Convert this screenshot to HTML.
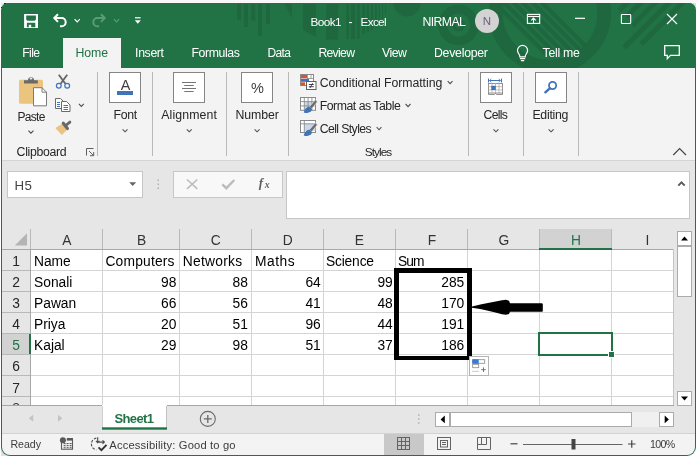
<!DOCTYPE html>
<html>
<head>
<meta charset="utf-8">
<title>Book1 - Excel</title>
<style>
html,body{margin:0;padding:0;background:#fff;}
body{width:698px;height:459px;overflow:hidden;position:relative;font-family:"Liberation Sans",sans-serif;font-size:12px;color:#262626;}
#frame{position:absolute;left:1px;top:3px;width:695px;height:453px;background:#217346;border-radius:7px 7px 9px 9px;}
#c{position:absolute;left:0;top:0;width:698px;height:459px;will-change:transform;clip-path:inset(3px 3px 4px 2px round 6px 6px 8px 8px);}
#c div,#c svg{position:absolute;}
.t{white-space:nowrap;}
svg{overflow:visible;}
</style>
</head>
<body>
<div style="position:absolute;left:0;top:0;width:698px;height:3px;background:#f8f8f8"></div><div style="position:absolute;left:1px;top:3px;width:7px;height:7px;background:#e6e6e6"></div><div style="position:absolute;left:689px;top:3px;width:7px;height:7px;background:#dedede"></div><div style="position:absolute;left:1px;top:448px;width:8px;height:8px;background:#e0e0e0"></div>
<div id="frame"></div><div style="position:absolute;left:4px;top:3px;width:2px;height:1px;background:#222"></div><div style="position:absolute;left:1px;top:7px;width:1px;height:1px;background:#222"></div>
<div id="c">
<div style="left:2px;top:3px;width:694px;height:65px;background:#217346;"></div>
<div style="left:2px;top:68px;width:694px;height:92px;background:#f3f3f3;"></div>
<div style="left:2px;top:160px;width:694px;height:1px;background:#d4d4d4;"></div>
<div style="left:2px;top:161px;width:694px;height:273px;background:#e6e6e6;"></div>
<div style="left:2px;top:434px;width:694px;height:22px;background:#f3f3f3;"></div>
<svg style="left:0;top:0" width="698" height="68" viewBox="0 0 698 68"><defs><clipPath id="gc"><rect x="2" y="3" width="694" height="65"/></clipPath></defs><g clip-path="url(#gc)"><g fill="#1f673e"><rect x="237" y="4" width="4.0" height="16"/><rect x="244" y="4" width="4.0" height="23"/><rect x="251.3" y="4" width="3.9" height="16.6"/><rect x="258.2" y="4" width="3.9" height="32"/><rect x="266" y="4" width="4.0" height="19.7"/><path d="M284.800 4 L292 4 L292 18 Z"/><path d="M303 4 L316 4 L316 37 L303 30 Z"/><rect x="326.3" y="4" width="11.9" height="35.5"/><rect x="346.4" y="4" width="2.8" height="35"/><rect x="351" y="4" width="4.0" height="35"/><rect x="357" y="4" width="2.6" height="34.5"/><rect x="362.4" y="4" width="2.4" height="30.200000000000003"/><rect x="366.6" y="4" width="2.4" height="28.299999999999997"/><rect x="371.2" y="4" width="1.8" height="25.6"/><rect x="375.2" y="4" width="1.5" height="22"/><rect x="378.9" y="4" width="1.1" height="18.3"/><rect x="382.2" y="4" width="0.9" height="14.600000000000001"/><rect x="385" y="4" width="0.9" height="10"/><circle cx="407" cy="3" r="13.500"/></g><circle cx="458.5" cy="25" r="15.9" fill="none" stroke="#1f673e" stroke-width="8.8"/><circle cx="458.5" cy="25" r="4.8" fill="none" stroke="#1f673e" stroke-width="3.4"/><circle cx="550" cy="12.7" r="54.1" fill="none" stroke="#1f673e" stroke-width="13.7"/><clipPath id="rc"><circle cx="550" cy="12.7" r="48"/></clipPath><g clip-path="url(#rc)" stroke="#1f673e" stroke-width="4.2"><path d="M485.0 -7 L547.0 55"/><path d="M494.5 -7 L556.5 55"/><path d="M504.0 -7 L566.0 55"/><path d="M513.5 -7 L575.5 55"/><path d="M523.0 -7 L585.0 55"/><path d="M532.5 -7 L594.5 55"/></g><g stroke="#1f673e" stroke-width="5"><path d="M629.7 0 L619.2 10.5"/><path d="M643.5 0 L626.5 17"/><path d="M657.8 0 L632.3 25.5"/><path d="M671.6 0 L624.1 47.5"/><path d="M685.2 0 L641.2 44"/></g></g></svg>
<div style="left:63px;top:38px;width:58px;height:30px;background:#f3f3f3;"></div>
<svg style="left:0;top:0" width="698" height="68" viewBox="0 0 698 68">
<path fill-rule="evenodd" fill="#ffffff" d="M24.1 14 H38 V28 H24.1 Z M26.200 15.500 V19.600 L27.300 20.700 H34.800 L35.900 19.600 V15.500 Z M26.900 22.800 V27.200 H28.800 V24.800 H31.200 V27.200 H35.300 V22.800 Z"/>
<g fill="none" stroke="#ffffff" stroke-width="2" stroke-linejoin="miter">
<path d="M58 14.3 L54.3 18.1 L58 21.9"/>
<path d="M54.8 18.1 H61.6 A4.1 4.1 0 0 1 61.6 26.3 H60"/>
</g>
<g fill="none" stroke="#5c9a78" stroke-width="2">
<path d="M101 14.300 L104.700 18.100 L101 21.900"/>
<path d="M104.200 18.100 H97.400 A4.100 4.100 0 0 0 97.400 26.300 H99"/>
</g>
<path d="M74.6 19.2 L77.2 21.8 L79.8 19.2" fill="none" stroke="#ffffff" stroke-width="1.2"/>
<path d="M113.9 19.2 L116.5 21.8 L119.1 19.2" fill="none" stroke="#5c9a78" stroke-width="1.2"/>
<rect x="135" y="17.2" width="5.6" height="1.2" fill="#ffffff"/>
<path d="M134.8 20.2 H140.8 L137.8 23.8 Z" fill="#ffffff"/>
<!-- window controls -->
<g fill="none" stroke="#ffffff" stroke-width="1.1">
<rect x="527.400" y="14.400" width="12.300" height="9"/>
<path d="M527.400 16.500 H539.700"/>
<path d="M533.500 23 V18.300 M531.300 20.300 L533.500 18.100 L535.700 20.300"/>
<path d="M575 18.300 H585" stroke-width="1.200"/>
<rect x="621.400" y="14.500" width="9.300" height="9" rx="0.800"/>
<path d="M667 14 L677 24 M677 14 L667 24"/>
<!-- comments -->
<path d="M664.7 45.7 H679.3 V55.3 H670.5 L667.3 58.6 V55.3 H664.7 Z" stroke-width="1.3"/>
<!-- bulb -->
<path d="M519.900 56.900 C519.900 54.200 517.500 53.300 517.500 50.500 A5.050 5.050 0 0 1 527.600 50.500 C527.600 53.300 525.200 54.200 525.200 56.900 Z M519.900 58.700 H525.200 M520.900 60.700 H524.200" stroke-width="1.200"/>
</g>
<circle cx="487" cy="21" r="12" fill="#d3d3d3"/>
</svg>
<div class="t" style="left:482.86px;top:15px;font-size:11.5px;line-height:12px;color:#6e5f80;">N</div>
<div class="t" style="left:310.60px;top:15px;font-size:11.8px;line-height:14px;color:#ffffff;letter-spacing:-0.638px;">Book1</div>
<div class="t" style="left:348.50px;top:15px;font-size:12.3px;line-height:14px;color:#ffffff;">-</div>
<div class="t" style="left:360.50px;top:15px;font-size:11.8px;line-height:14px;color:#ffffff;letter-spacing:-0.688px;">Excel</div>
<div class="t" style="left:422.40px;top:15px;font-size:12.3px;line-height:14px;color:#ffffff;letter-spacing:-0.599px;">NIRMAL</div>
<div class="t" style="left:22.30px;top:46px;font-size:12.2px;line-height:14px;color:#ffffff;letter-spacing:-0.647px;">File</div>
<div class="t" style="left:75.40px;top:46px;font-size:12.3px;line-height:14px;color:#217346;letter-spacing:-0.047px;">Home</div>
<div class="t" style="left:135.10px;top:46px;font-size:12.3px;line-height:14px;color:#ffffff;letter-spacing:-0.370px;">Insert</div>
<div class="t" style="left:191.50px;top:46px;font-size:12.3px;line-height:14px;color:#ffffff;letter-spacing:-0.399px;">Formulas</div>
<div class="t" style="left:267.50px;top:46px;font-size:12.0px;line-height:14px;color:#ffffff;letter-spacing:-0.660px;">Data</div>
<div class="t" style="left:318.40px;top:46px;font-size:12.2px;line-height:14px;color:#ffffff;letter-spacing:-0.683px;">Review</div>
<div class="t" style="left:382.00px;top:46px;font-size:12.3px;line-height:14px;color:#ffffff;letter-spacing:-0.482px;">View</div>
<div class="t" style="left:434.00px;top:46px;font-size:12.3px;line-height:14px;color:#ffffff;letter-spacing:-0.261px;">Developer</div>
<div class="t" style="left:542.50px;top:46px;font-size:12.3px;line-height:14px;color:#ffffff;letter-spacing:-0.249px;">Tell me</div>
<div style="left:97px;top:72px;width:1px;height:84px;background:#b9b9b9;"></div>
<div style="left:152px;top:72px;width:1px;height:84px;background:#b9b9b9;"></div>
<div style="left:226px;top:72px;width:1px;height:84px;background:#b9b9b9;"></div>
<div style="left:288px;top:72px;width:1px;height:84px;background:#b9b9b9;"></div>
<div style="left:468px;top:72px;width:1px;height:84px;background:#b9b9b9;"></div>
<div style="left:523px;top:72px;width:1px;height:84px;background:#b9b9b9;"></div>
<div style="left:578px;top:72px;width:1px;height:84px;background:#b9b9b9;"></div>
<div style="left:109px;top:72px;width:32px;height:31px;background:#fff;box-sizing:border-box;border:1px solid #858585;"></div>
<div style="left:173px;top:72px;width:32px;height:31px;background:#fff;box-sizing:border-box;border:1px solid #858585;"></div>
<div style="left:241px;top:72px;width:32px;height:31px;background:#fff;box-sizing:border-box;border:1px solid #858585;"></div>
<div style="left:480px;top:72px;width:32px;height:31px;background:#fff;box-sizing:border-box;border:1px solid #858585;"></div>
<div style="left:535px;top:72px;width:32px;height:31px;background:#fff;box-sizing:border-box;border:1px solid #858585;"></div>
<div class="t" style="left:113.50px;top:108px;font-size:12.3px;line-height:14px;color:#262626;letter-spacing:-0.333px;">Font</div>
<div class="t" style="left:161.20px;top:108px;font-size:12.3px;line-height:14px;color:#262626;letter-spacing:0.141px;">Alignment</div>
<div class="t" style="left:235.40px;top:108px;font-size:12.3px;line-height:14px;color:#262626;letter-spacing:-0.045px;">Number</div>
<div class="t" style="left:483.60px;top:108px;font-size:12.2px;line-height:14px;color:#262626;letter-spacing:-0.686px;">Cells</div>
<div class="t" style="left:532.40px;top:108px;font-size:12.3px;line-height:14px;color:#262626;letter-spacing:-0.256px;">Editing</div>
<svg style="left:0;top:0" width="698" height="459"><path d="M122.6 129.3 L125.05 131.8 L127.5 129.3" fill="none" stroke="#505050" stroke-width="1.1"/></svg>
<svg style="left:0;top:0" width="698" height="459"><path d="M186.8 129.3 L189.25 131.8 L191.7 129.3" fill="none" stroke="#505050" stroke-width="1.1"/></svg>
<svg style="left:0;top:0" width="698" height="459"><path d="M254.6 129.3 L257.1 131.8 L259.6 129.3" fill="none" stroke="#505050" stroke-width="1.1"/></svg>
<svg style="left:0;top:0" width="698" height="459"><path d="M493.5 129.3 L495.95 131.8 L498.4 129.3" fill="none" stroke="#505050" stroke-width="1.1"/></svg>
<svg style="left:0;top:0" width="698" height="459"><path d="M548.6 129.3 L551.1 131.8 L553.6 129.3" fill="none" stroke="#505050" stroke-width="1.1"/></svg>
<div class="t" style="left:17.40px;top:110px;font-size:12.0px;line-height:14px;color:#262626;letter-spacing:-0.690px;">Paste</div>
<svg style="left:0;top:0" width="698" height="459"><path d="M28.4 130.6 L30.95 133.2 L33.5 130.6" fill="none" stroke="#505050" stroke-width="1.1"/></svg>
<svg style="left:0;top:0" width="698" height="459"><path d="M78.9 103.9 L81.35 106.5 L83.8 103.9" fill="none" stroke="#505050" stroke-width="1.1"/></svg>
<div class="t" style="left:16.60px;top:145px;font-size:12.3px;line-height:14px;color:#262626;letter-spacing:-0.318px;">Clipboard</div>
<div class="t" style="left:364.80px;top:145px;font-size:11.8px;line-height:14px;color:#262626;letter-spacing:-0.931px;">Styles</div>
<div class="t" style="left:319.70px;top:76px;font-size:12.3px;line-height:14px;color:#262626;letter-spacing:-0.054px;">Conditional Formatting</div>
<div class="t" style="left:319.70px;top:99px;font-size:12.3px;line-height:14px;color:#262626;letter-spacing:-0.489px;">Format as Table</div>
<div class="t" style="left:319.70px;top:122px;font-size:12.3px;line-height:14px;color:#262626;letter-spacing:-0.612px;">Cell Styles</div>
<svg style="left:0;top:0" width="698" height="459"><path d="M447.7 81.2 L450.1 83.7 L452.5 81.2" fill="none" stroke="#505050" stroke-width="1.1"/></svg>
<svg style="left:0;top:0" width="698" height="459"><path d="M405.6 104 L408.05 106.6 L410.5 104" fill="none" stroke="#505050" stroke-width="1.1"/></svg>
<svg style="left:0;top:0" width="698" height="459"><path d="M376.7 127.2 L379.04999999999995 129.8 L381.4 127.2" fill="none" stroke="#505050" stroke-width="1.1"/></svg>
<div class="t" style="left:120.68px;top:77px;font-size:14.4px;line-height:16px;color:#404040;">A</div>
<div style="left:117px;top:91.3px;width:16px;height:3.7px;background:#3f74b8;"></div>
<svg style="left:0;top:0" width="698" height="170" viewBox="0 0 698 170">
<g stroke="#747474" stroke-width="1" fill="none">
<path d="M182 82.5 H196 M184.3 85.5 H193.7 M182 88.5 H196 M184.3 91.5 H193.7"/>
</g>
<!-- dialog launcher -->
<g stroke="#5f5f5f" stroke-width="1" fill="none">
<path d="M86.5 155.5 V148.5 H93.5"/>
<path d="M89 151 L93.5 155.5 M93.7 152 V155.7 H90"/>
</g>
<!-- collapse caret -->
<path d="M673.3 155 L679.6 148.5 L686 155" stroke="#444" stroke-width="1.2" fill="none"/>
<!-- paste icon -->
<rect x="19" y="79.800" width="24" height="23.900" rx="1.500" fill="#ebc47f"/>
<path d="M24 83.500 V80.200 H28 A3 3 0 0 1 34 80.200 H37.800 V83.500 Z" fill="#6a6a6a"/>
<rect x="29.8" y="77.8" width="2.4" height="1.6" fill="#f3f3f3"/>
<path d="M33.500 87.700 H42 L46.500 92.200 V105.800 H33.500 Z" fill="#fff" stroke="#7a7a7a" stroke-width="1"/>
<path d="M42 87.700 V92.200 H46.500" fill="none" stroke="#7a7a7a" stroke-width="1"/>
<!-- scissors -->
<g fill="none">
<path d="M58.800 74.800 L65.400 83.800" stroke="#646464" stroke-width="1.800"/>
<path d="M67.200 74.800 L60.600 83.800" stroke="#646464" stroke-width="1.800"/>
<circle cx="58.800" cy="85.800" r="2.400" stroke="#3f74b8" stroke-width="1.200"/>
<circle cx="67.200" cy="85.800" r="2.400" stroke="#3f74b8" stroke-width="1.200"/>
</g>
<!-- copy -->
<g fill="#fff" stroke="#6a6a6a" stroke-width="1">
<path d="M55.500 98.500 H60.500 L63.500 101.500 V108.500 H55.500 Z"/>
<path d="M61.500 101.500 H66.500 L70 105 V111.500 H61.500 Z"/>
</g>
<path d="M57 102.500 H60 M57 104.500 H60 M57 106.500 H60 M63.500 105.500 H68 M63.500 107.500 H68 M63.500 109.500 H68" stroke="#3f74b8" stroke-width="1"/>
<!-- format painter -->
<path d="M55.300 128 L62.600 123.600 L66.600 130.200 L61.900 134.900 Z" fill="#eac282"/>
<path d="M63.300 123.300 L67.400 128.500" stroke="#686868" stroke-width="3.200" stroke-linecap="round" fill="none"/>
<path d="M66.300 125 L69.900 122.100" stroke="#686868" stroke-width="2.800" stroke-linecap="round" fill="none"/>
<!-- number % drawn as text below -->
<!-- conditional formatting icon -->
<g>
<rect x="300.500" y="74.500" width="13" height="11" fill="#fff" stroke="#8a8a8a"/>
<rect x="301" y="75" width="6" height="3.300" fill="#d8532f"/>
<rect x="301" y="78.800" width="8" height="3" fill="#3f74b8"/>
<rect x="301" y="82.300" width="4" height="3.200" fill="#d8532f"/>
<path d="M307.500 75 V79 M311 75 V79 M307 78.500 H313.500" stroke="#8a8a8a" stroke-width="0.800" fill="none"/>
<rect x="306.500" y="81.500" width="9.500" height="8" fill="#fff" stroke="#5f5f5f"/>
<path d="M308.800 84.500 H313.800 M308.800 86.700 H313.800 M312.600 83.200 L310 88" stroke="#333" stroke-width="0.900"/>
</g>
<!-- format as table icon -->
<g id="fat">
<rect x="300.500" y="97.500" width="15" height="12.800" fill="#fff"/>
<rect x="304.300" y="101.600" width="7.600" height="8.400" fill="#c9d8ec"/>
<rect x="300.500" y="97.500" width="15" height="12.800" fill="none" stroke="#8a8a8a"/>
<path d="M300.500 101.600 H315.500 M300.500 105.900 H315.500 M304.300 97.500 V110.300 M308.100 97.500 V110.300 M311.900 97.500 V110.300" stroke="#8a8a8a" stroke-width="0.900" fill="none"/>
<path d="M309.300 106.800 L315.300 99.800 L317.400 101.800 L311.600 109 Z" fill="#6d6d6d" stroke="#f3f3f3" stroke-width="0.600"/>
<path d="M303.800 112.800 C304.300 109 306.800 106.600 309.800 106.800 L312 109.200 C311.800 111.800 308.500 113.300 303.800 112.800 Z" fill="#3f74b8"/>
</g>
<!-- cell styles icon -->
<g id="cs">
<rect x="300.500" y="120.500" width="15" height="12" fill="#fff" stroke="#8a8a8a"/>
<rect x="304.300" y="124" width="11" height="7" fill="#c9d8ec"/>
<path d="M300.500 123.800 H315.500 M304.300 120.500 V132.500" stroke="#8a8a8a" stroke-width="0.900" fill="none"/>
<path d="M309.300 129.800 L315.300 122.800 L317.400 124.800 L311.600 132 Z" fill="#6d6d6d" stroke="#f3f3f3" stroke-width="0.600"/>
<path d="M303.800 135.800 C304.300 132 306.800 129.600 309.800 129.800 L312 132.200 C311.800 134.800 308.500 136.300 303.800 135.800 Z" fill="#3f74b8"/>
</g>
<!-- cells icon -->
<g>
<path d="M488.500 78.500 V82.500 M501.500 78.500 V82.500 M489.500 80.500 H500.500" stroke="#3f74b8" stroke-width="1" fill="none"/>
<path d="M491.300 79 L489.600 80.500 L491.300 82 M498.700 79 L500.400 80.500 L498.700 82" stroke="#3f74b8" stroke-width="0.900" fill="none"/>
<rect x="488.500" y="83.500" width="14" height="9.500" fill="#fff" stroke="#8a8a8a" stroke-width="0.900"/>
<path d="M488.500 86.700 H502.500 M488.500 89.900 H502.500 M492 83.500 V93 M495.500 83.500 V93 M499 83.500 V93" stroke="#a6a6a6" stroke-width="0.700"/>
<rect x="491.300" y="85.800" width="4.400" height="4.200" fill="#3f74b8"/>
<path d="M488.500 93 V94.400 H494.300 L495.500 93.500 L496.700 94.400 H502.500 V93" stroke="#7a7a7a" stroke-width="0.900" fill="none"/>
</g>
<!-- editing magnifier -->
<circle cx="552.600" cy="85.500" r="3.600" fill="none" stroke="#3f74b8" stroke-width="1.800"/>
<path d="M549.800 88.300 L545.300 92.300" stroke="#3f74b8" stroke-width="2.400" stroke-linecap="round"/>
</svg>
<div class="t" style="left:251.05px;top:80px;font-size:14.5px;line-height:16px;color:#404040;">%</div>
<div style="left:7px;top:171px;width:136px;height:27px;background:#fff;box-sizing:border-box;border:1px solid #c6c6c6;"></div>
<div class="t" style="left:14.50px;top:178px;font-size:13.3px;line-height:15px;color:#444;letter-spacing:0.276px;">H5</div>
<div style="left:173px;top:171px;width:110px;height:27px;background:#f8f8f8;box-sizing:border-box;border:1px solid #c6c6c6;"></div>
<div style="left:286px;top:171px;width:404px;height:48px;background:#fff;box-sizing:border-box;border:1px solid #c6c6c6;"></div>
<svg style="left:0;top:0" width="698" height="230" viewBox="0 0 698 230">
<path d="M129.200 182.300 H136.200 L132.700 186 Z" fill="#666"/>
<g fill="#b0b0b0"><rect x="157.500" y="179.500" width="1.500" height="1.500"/><rect x="157.500" y="183.500" width="1.500" height="1.500"/><rect x="157.500" y="187.500" width="1.500" height="1.500"/></g>
<path d="M187 179.500 L197.300 188.800 M197.300 179.500 L187 188.800" stroke="#bcbcbc" stroke-width="1.600" fill="none"/>
<path d="M222.300 184.300 L226.300 188.200 L234.300 180" stroke="#bcbcbc" stroke-width="2.400" fill="none"/>
<path d="M678.300 185.600 L681.500 182.300 L684.700 185.600" stroke="#5a5a5a" stroke-width="1.900" fill="none"/>
</svg>
<div class="t" style="left:258.80px;top:175px;font-size:13px;line-height:15px;color:#606060;font-style:italic;font-family:'Liberation Serif',serif;font-weight:bold;">f</div>
<div class="t" style="left:264.64px;top:179px;font-size:9.8px;line-height:11px;color:#606060;font-style:italic;font-family:'Liberation Serif',serif;font-weight:bold;">x</div>
<div style="left:31px;top:250px;width:642px;height:155px;background:#fff;"></div>
<div style="left:540px;top:229px;width:71px;height:20px;background:#d2d2d2;"></div>
<div style="left:2px;top:334px;width:28px;height:20px;background:#d2d2d2;"></div>
<div style="left:102px;top:250px;width:1px;height:155px;background:#d4d4d4;"></div>
<div style="left:179px;top:250px;width:1px;height:155px;background:#d4d4d4;"></div>
<div style="left:251px;top:250px;width:1px;height:155px;background:#d4d4d4;"></div>
<div style="left:323px;top:250px;width:1px;height:155px;background:#d4d4d4;"></div>
<div style="left:395px;top:250px;width:1px;height:155px;background:#d4d4d4;"></div>
<div style="left:467px;top:250px;width:1px;height:155px;background:#d4d4d4;"></div>
<div style="left:539px;top:250px;width:1px;height:155px;background:#d4d4d4;"></div>
<div style="left:611px;top:250px;width:1px;height:155px;background:#d4d4d4;"></div>
<div style="left:31px;top:270px;width:642px;height:1px;background:#d4d4d4;"></div>
<div style="left:31px;top:291px;width:642px;height:1px;background:#d4d4d4;"></div>
<div style="left:31px;top:312px;width:642px;height:1px;background:#d4d4d4;"></div>
<div style="left:31px;top:333px;width:642px;height:1px;background:#d4d4d4;"></div>
<div style="left:31px;top:354px;width:642px;height:1px;background:#d4d4d4;"></div>
<div style="left:31px;top:375px;width:642px;height:1px;background:#d4d4d4;"></div>
<div style="left:31px;top:396px;width:642px;height:1px;background:#d4d4d4;"></div>
<div style="left:30px;top:229px;width:1px;height:21px;background:#b9b9b9;"></div>
<div style="left:102px;top:229px;width:1px;height:21px;background:#b9b9b9;"></div>
<div style="left:179px;top:229px;width:1px;height:21px;background:#b9b9b9;"></div>
<div style="left:251px;top:229px;width:1px;height:21px;background:#b9b9b9;"></div>
<div style="left:323px;top:229px;width:1px;height:21px;background:#b9b9b9;"></div>
<div style="left:395px;top:229px;width:1px;height:21px;background:#b9b9b9;"></div>
<div style="left:467px;top:229px;width:1px;height:21px;background:#b9b9b9;"></div>
<div style="left:539px;top:229px;width:1px;height:21px;background:#b9b9b9;"></div>
<div style="left:611px;top:229px;width:1px;height:21px;background:#b9b9b9;"></div>
<div style="left:673px;top:249px;width:1px;height:157px;background:#c4c4c4;"></div>
<div style="left:2px;top:270px;width:28px;height:1px;background:#b9b9b9;"></div>
<div style="left:2px;top:291px;width:28px;height:1px;background:#b9b9b9;"></div>
<div style="left:2px;top:312px;width:28px;height:1px;background:#b9b9b9;"></div>
<div style="left:2px;top:333px;width:28px;height:1px;background:#b9b9b9;"></div>
<div style="left:2px;top:354px;width:28px;height:1px;background:#b9b9b9;"></div>
<div style="left:2px;top:375px;width:28px;height:1px;background:#b9b9b9;"></div>
<div style="left:2px;top:396px;width:28px;height:1px;background:#b9b9b9;"></div>
<div style="left:2px;top:249px;width:671px;height:1px;background:#a8a8a8;"></div>
<div style="left:30px;top:250px;width:1px;height:155px;background:#a8a8a8;"></div>
<div style="left:539px;top:248px;width:73px;height:2px;background:#217346;"></div>
<div style="left:29px;top:334px;width:2px;height:20px;background:#217346;"></div>
<div style="left:2px;top:405px;width:672px;height:1px;background:#a6a6a6;"></div>
<svg style="left:0;top:0" width="40" height="260"><path d="M27 233.300 V245.500 H14.800 Z" fill="#b4b4b4"/></svg>
<div class="t" style="left:62.18px;top:233px;font-size:13.8px;line-height:15px;color:#333;">A</div>
<div class="t" style="left:137.01px;top:233px;font-size:13.8px;line-height:15px;color:#333;">B</div>
<div class="t" style="left:210.63px;top:233px;font-size:13.8px;line-height:15px;color:#333;">C</div>
<div class="t" style="left:282.73px;top:233px;font-size:13.8px;line-height:15px;color:#333;">D</div>
<div class="t" style="left:354.81px;top:233px;font-size:13.8px;line-height:15px;color:#333;">E</div>
<div class="t" style="left:427.79px;top:233px;font-size:13.8px;line-height:15px;color:#333;">F</div>
<div class="t" style="left:498.42px;top:233px;font-size:13.8px;line-height:15px;color:#333;">G</div>
<div class="t" style="left:645.57px;top:233px;font-size:13.8px;line-height:15px;color:#333;">I</div>
<div class="t" style="left:571.03px;top:233px;font-size:13.8px;line-height:15px;color:#217346;">H</div>
<div class="t" style="left:12.17px;top:254px;font-size:13.8px;line-height:15px;color:#262626;">1</div>
<div class="t" style="left:12.17px;top:275px;font-size:13.8px;line-height:15px;color:#262626;">2</div>
<div class="t" style="left:12.17px;top:296px;font-size:13.8px;line-height:15px;color:#262626;">3</div>
<div class="t" style="left:12.17px;top:317px;font-size:13.8px;line-height:15px;color:#262626;">4</div>
<div class="t" style="left:12.17px;top:338px;font-size:13.8px;line-height:15px;color:#217346;">5</div>
<div class="t" style="left:12.17px;top:359px;font-size:13.8px;line-height:15px;color:#262626;">6</div>
<div class="t" style="left:12.17px;top:381px;font-size:13.8px;line-height:15px;color:#262626;">7</div>
<div style="left:2px;top:397px;width:28px;height:8px;overflow:hidden"><div class="t" style="left:10.2px;top:4px;font-size:13.8px;line-height:15px;color:#333">8</div></div>
<div class="t" style="left:34.00px;top:254px;font-size:13.8px;line-height:15px;color:#000;letter-spacing:-0.049px;">Name</div>
<div class="t" style="left:105.40px;top:254px;font-size:13.8px;line-height:15px;color:#000;letter-spacing:0.202px;">Computers</div>
<div class="t" style="left:182.80px;top:254px;font-size:13.8px;line-height:15px;color:#000;letter-spacing:0.251px;">Networks</div>
<div class="t" style="left:255.00px;top:254px;font-size:13.8px;line-height:15px;color:#000;letter-spacing:0.524px;">Maths</div>
<div class="t" style="left:325.90px;top:254px;font-size:13.8px;line-height:15px;color:#000;letter-spacing:-0.155px;">Science</div>
<div class="t" style="left:398.00px;top:254px;font-size:13.8px;line-height:15px;color:#000;letter-spacing:-0.980px;">Sum</div>
<div class="t" style="left:34.00px;top:275px;font-size:13.8px;line-height:15px;color:#000;">Sonali</div>
<div class="t" style="left:161.08px;top:275px;font-size:13.8px;line-height:15px;color:#000;">98</div>
<div class="t" style="left:232.48px;top:275px;font-size:13.8px;line-height:15px;color:#000;">88</div>
<div class="t" style="left:305.38px;top:275px;font-size:13.8px;line-height:15px;color:#000;">64</div>
<div class="t" style="left:377.38px;top:275px;font-size:13.8px;line-height:15px;color:#000;">99</div>
<div class="t" style="left:441.25px;top:275px;font-size:13.8px;line-height:15px;color:#000;">285</div>
<div class="t" style="left:34.00px;top:296px;font-size:13.8px;line-height:15px;color:#000;">Pawan</div>
<div class="t" style="left:161.08px;top:296px;font-size:13.8px;line-height:15px;color:#000;">66</div>
<div class="t" style="left:232.48px;top:296px;font-size:13.8px;line-height:15px;color:#000;">56</div>
<div class="t" style="left:305.38px;top:296px;font-size:13.8px;line-height:15px;color:#000;">41</div>
<div class="t" style="left:377.38px;top:296px;font-size:13.8px;line-height:15px;color:#000;">48</div>
<div class="t" style="left:441.25px;top:296px;font-size:13.8px;line-height:15px;color:#000;">170</div>
<div class="t" style="left:34.00px;top:317px;font-size:13.8px;line-height:15px;color:#000;">Priya</div>
<div class="t" style="left:161.08px;top:317px;font-size:13.8px;line-height:15px;color:#000;">20</div>
<div class="t" style="left:232.48px;top:317px;font-size:13.8px;line-height:15px;color:#000;">51</div>
<div class="t" style="left:305.38px;top:317px;font-size:13.8px;line-height:15px;color:#000;">96</div>
<div class="t" style="left:377.38px;top:317px;font-size:13.8px;line-height:15px;color:#000;">44</div>
<div class="t" style="left:441.25px;top:317px;font-size:13.8px;line-height:15px;color:#000;">191</div>
<div class="t" style="left:34.00px;top:338px;font-size:13.8px;line-height:15px;color:#000;">Kajal</div>
<div class="t" style="left:161.08px;top:338px;font-size:13.8px;line-height:15px;color:#000;">29</div>
<div class="t" style="left:232.48px;top:338px;font-size:13.8px;line-height:15px;color:#000;">98</div>
<div class="t" style="left:305.38px;top:338px;font-size:13.8px;line-height:15px;color:#000;">51</div>
<div class="t" style="left:377.38px;top:338px;font-size:13.8px;line-height:15px;color:#000;">37</div>
<div class="t" style="left:441.25px;top:338px;font-size:13.8px;line-height:15px;color:#000;">186</div>
<div style="left:394px;top:268px;width:78px;height:91.5px;background:transparent;box-sizing:border-box;border:5px solid #000;border-bottom-width:4.5px;"></div>
<svg style="left:0;top:0" width="698" height="459" viewBox="0 0 698 459">
<path d="M472 306.400 L481.500 304.300 L494.400 301.700 L502 300.300 L506 299.800 L509 300.800 L510 303.200 L542 303.200 L542.800 304 L542.800 311.300 L542 311.800 L510 311.800 L509 314 L506 314.800 L502 314.300 L494.400 312.200 L481.500 309.300 L472 307.700 Z" fill="#000"/>
</svg>
<div style="left:469px;top:356px;width:20px;height:20px;background:#fff;box-sizing:border-box;border:1px solid #b4b4b4;"></div>
<svg style="left:0;top:0" width="698" height="459" viewBox="0 0 698 459">
<rect x="472.700" y="359.700" width="12" height="3.600" fill="#fff" stroke="#8a8a8a" stroke-width="0.800"/>
<rect x="472.300" y="359.300" width="6.400" height="4.400" fill="#3a78d6"/>
<rect x="472.700" y="364.300" width="6" height="3.400" fill="#fff" stroke="#8a8a8a" stroke-width="0.800"/>
<path d="M472.500 371.300 H479" stroke="#8a8a8a" stroke-width="0.900" stroke-dasharray="1 1"/>
<path d="M481.200 369.700 H485.800 M483.500 367.400 V372" stroke="#666" stroke-width="0.900"/>
</svg>
<div style="left:538px;top:332px;width:75px;height:24px;background:transparent;box-sizing:border-box;border:2px solid #217346;"></div>
<div style="left:608px;top:351px;width:7px;height:7px;background:#217346;box-sizing:border-box;border:1px solid #fff;"></div>
<div style="left:677px;top:231px;width:15px;height:15px;background:#fff;box-sizing:border-box;border:1px solid #ababab;"></div>
<div style="left:677px;top:246px;width:15px;height:51px;background:#fff;box-sizing:border-box;border:1px solid #ababab;"></div>
<div style="left:677px;top:391px;width:15px;height:15px;background:#fff;box-sizing:border-box;border:1px solid #ababab;"></div>
<svg style="left:0;top:0" width="698" height="459" viewBox="0 0 698 459">
<path d="M681 240.500 H688 L684.500 236.500 Z" fill="#000"/>
<path d="M681 396.500 H688 L684.500 400.500 Z" fill="#000"/>
<path d="M33.200 414.800 V421.800 L28.800 418.300 Z" fill="#c3c3c3"/>
<path d="M58 414.800 V421.800 L62.400 418.300 Z" fill="#c3c3c3"/>
<g fill="#b0b0b0"><rect x="418" y="414.300" width="1.500" height="1.500"/><rect x="418" y="418.300" width="1.500" height="1.500"/><rect x="418" y="422.300" width="1.500" height="1.500"/></g>
<circle cx="207.800" cy="418.900" r="7.500" fill="none" stroke="#6a6a6a" stroke-width="1.100"/>
<path d="M203.800 418.900 H211.800 M207.800 414.900 V422.900" stroke="#6a6a6a" stroke-width="1.300"/>
</svg>
<div style="left:102px;top:405px;width:65px;height:24px;background:#fff;"></div>
<div style="left:102px;top:406px;width:1px;height:22px;background:#d0d0d0;"></div>
<div style="left:166px;top:406px;width:1px;height:22px;background:#c2c2c2;"></div>
<svg style="left:0;top:0" width="698" height="459"><rect x="102" y="427.3" width="65" height="2.4" fill="#217346"/></svg>
<div class="t" style="left:114.50px;top:411px;font-size:13px;line-height:15px;color:#217346;letter-spacing:-0.628px;font-weight:bold;">Sheet1</div>
<div style="left:435px;top:412px;width:15px;height:15px;background:#fff;box-sizing:border-box;border:1px solid #ababab;"></div>
<div style="left:450px;top:412px;width:182px;height:15px;background:#fff;box-sizing:border-box;border:1px solid #ababab;"></div>
<div style="left:632px;top:412px;width:27px;height:15px;background:#f0f0f0;"></div>
<div style="left:659px;top:412px;width:15px;height:15px;background:#fff;box-sizing:border-box;border:1px solid #ababab;"></div>
<div style="left:2px;top:433px;width:694px;height:1px;background:#d2d2d2;"></div>
<div class="t" style="left:10.50px;top:438px;font-size:10.6px;line-height:12px;color:#3c3c3c;letter-spacing:-0.034px;">Ready</div>
<div class="t" style="left:109.30px;top:439px;font-size:11.2px;line-height:12px;color:#3c3c3c;letter-spacing:0.157px;">Accessibility: Good to go</div>
<div class="t" style="left:650.00px;top:438px;font-size:10.6px;line-height:12px;color:#3c3c3c;letter-spacing:-0.612px;">100%</div>
<div style="left:384px;top:434px;width:40px;height:21px;background:#c8c8c8;"></div>
<svg style="left:0;top:0" width="698" height="459" viewBox="0 0 698 459">
<path d="M444.800 415.600 V423.200 L440.600 419.400 Z" fill="#000"/>
<path d="M664.700 415.600 V423.200 L668.900 419.400 Z" fill="#000"/>
<!-- macro icon -->
<path d="M61.500 441 V449.300 H72.500 V439" fill="none" stroke="#5a5a5a" stroke-width="1.100"/>
<rect x="66.800" y="438" width="6.200" height="2.600" fill="#5a5a5a"/>
<circle cx="62.900" cy="440.200" r="3" fill="#5a5a5a"/>
<g fill="#5a5a5a">
<rect x="63.600" y="443" width="2" height="1.100"/><rect x="66.600" y="443" width="2" height="1.100"/><rect x="69.600" y="443" width="2" height="1.100"/>
<rect x="63.600" y="445.100" width="2" height="1.100"/><rect x="66.600" y="445.100" width="2" height="1.100"/><rect x="69.600" y="445.100" width="2" height="1.100"/>
<rect x="63.600" y="447.200" width="2" height="1.100"/><rect x="66.600" y="447.200" width="2" height="1.100"/><rect x="69.600" y="447.200" width="2" height="1.100"/>
</g>
<!-- accessibility icon -->
<path d="M96.300 438.100 A6 6 0 0 0 96.300 449.900" fill="none" stroke="#4a4a4a" stroke-width="1.100" stroke-dasharray="2.600 1.400"/>
<path d="M97.700 437.200 V442.600 M95.900 440.800 L97.700 442.700 L99.500 440.800" fill="none" stroke="#4a4a4a" stroke-width="1.100"/>
<path d="M98.500 442.100 H104.200 M102.500 440.300 L104.400 442.100 L102.500 443.900" fill="none" stroke="#4a4a4a" stroke-width="1.100"/>
<path d="M98.500 447.400 L101.400 450.200 L106.500 444.900" fill="none" stroke="#333" stroke-width="1.900"/>
<!-- normal view -->
<g fill="none" stroke="#636363" stroke-width="1">
<rect x="397.500" y="437.500" width="12" height="12"/>
<path d="M401.500 437.500 V449.500 M405.500 437.500 V449.500 M397.500 441.500 H409.500 M397.500 445.500 H409.500"/>
<rect x="437.500" y="437.500" width="13" height="12"/>
<rect x="440.500" y="440.500" width="7" height="6.500"/>
<path d="M442 442.500 H446 M442 444.500 H446"/>
<path d="M477.500 437.500 H490.500 V449.500 H477.500 Z M481.500 437.500 V444.500 H486.500 V437.500 M477.500 444.500 H481.500"/>
</g>
<path d="M510.500 443.800 H517.500" stroke="#444" stroke-width="1.200"/>
<path d="M523 444.500 H622.500" stroke="#666" stroke-width="1"/>
<rect x="571.500" y="439" width="4" height="10.500" fill="#444"/>
<path d="M628 444 H635.500 M631.750 440.200 V447.800" stroke="#444" stroke-width="1.200"/>
</svg>
</div>
</body>
</html>
